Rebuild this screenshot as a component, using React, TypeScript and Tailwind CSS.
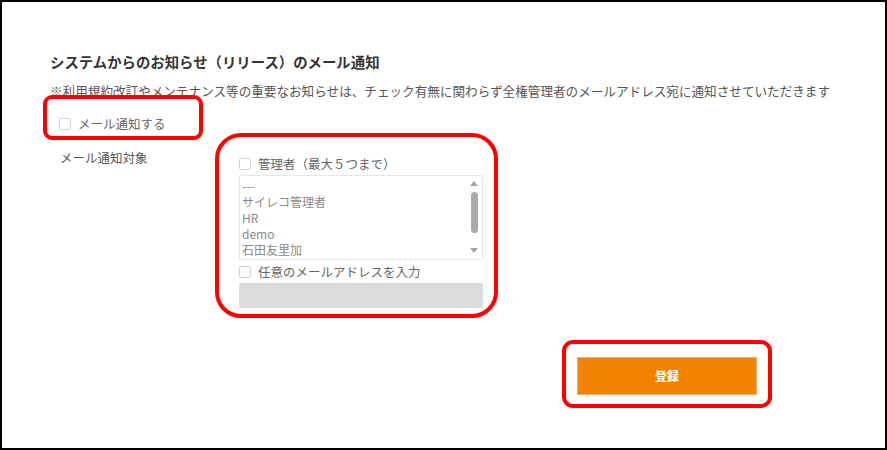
import React from "react";

const Checkbox = () => (
  <span className="inline-block w-[12px] h-[12px] shrink-0 rounded-[2px] border border-[#d4d4d4] bg-white" />
);

const admins = ["---", "サイレコ管理者", "HR", "demo", "石田友里加"];

export default function App() {
  return (
    <div className="relative w-[887px] h-[450px] bg-white border-2 border-black font-['Noto_Sans_CJK_JP','Noto_Sans',sans-serif]">
      <div className="pl-[48px] pt-[50px]">
        <h2 className="text-[14.4px] leading-[20px] font-bold text-[#333]">
          システムからのお知らせ（リリース）のメール通知
        </h2>
        <p className="mt-[9px] text-[12.6px] leading-[20px] text-[#555] whitespace-nowrap">
          ※利用規約改訂やメンテナンス等の重要なお知らせは、チェック有無に関わらず全権管理者のメールアドレス宛に通知させていただきます
        </p>

        {/* 通知ON/OFF */}
        <label className="mt-[13px] ml-[9px] flex items-center gap-[7px] h-[20px] text-[12.5px] text-[#666]">
          <Checkbox />
          <span>メール通知する</span>
        </label>

        {/* 通知対象 */}
        <div className="mt-[14px] flex">
          <div className="w-[189px] pl-[10px] text-[12.5px] leading-[20px] text-[#555]">
            メール通知対象
          </div>
          <div className="w-[244px]">
            <label className="mt-[6px] flex items-center gap-[7px] h-[20px] text-[12.5px] text-[#666]">
              <Checkbox />
              <span>管理者（最大５つまで）</span>
            </label>
            <div className="mt-[1px] h-[85px] flex rounded-[2px] border border-[#e6e6e6] bg-white">
              <ul className="flex-1 pl-[2px] pt-[2px] text-[12px] leading-[16px] text-[#8a8a8a]">
                {admins.map((a) => (
                  <li key={a}>{a}</li>
                ))}
              </ul>
              {/* scrollbar */}
              <div className="w-[14px] flex flex-col items-center pt-[5px] pb-[6px] mr-[1px]">
                <svg width="8" height="5" viewBox="0 0 8 5">
                  <path d="M4 0 L8 5 L0 5 Z" fill="#a3a3a3" />
                </svg>
                <div className="mt-[6px] w-[7px] h-[41px] rounded-full bg-[#ababab]" />
                <div className="flex-1" />
                <svg width="8" height="5" viewBox="0 0 8 5">
                  <path d="M0 0 L8 0 L4 5 Z" fill="#a3a3a3" />
                </svg>
              </div>
            </div>
            <label className="mt-[2px] flex items-center gap-[7px] h-[20px] text-[12.5px] text-[#666]">
              <Checkbox />
              <span>任意のメールアドレスを入力</span>
            </label>
            <div className="mt-[1px] h-[25px] rounded-[2px] bg-[#dcdcdc]" />
          </div>
        </div>

        <div className="mt-[49px] flex justify-end pr-[128px]">
          <button className="w-[180px] h-[38px] bg-[#f08300] border border-[#f5b070] text-white text-[12px] font-bold">
            登録
          </button>
        </div>
      </div>

      {/* 注釈の赤枠 */}
      <div className="absolute left-[41px] top-[93px] w-[160px] h-[45px] rounded-[9px] border-4 border-[#ff0000]" />
      <div className="absolute left-[213px] top-[131px] w-[283px] h-[185px] rounded-[26px] border-4 border-[#ff0000]" />
      <div className="absolute left-[560px] top-[338px] w-[210px] h-[68px] rounded-[11px] border-4 border-[#ff0000]" />
    </div>
  );
}
